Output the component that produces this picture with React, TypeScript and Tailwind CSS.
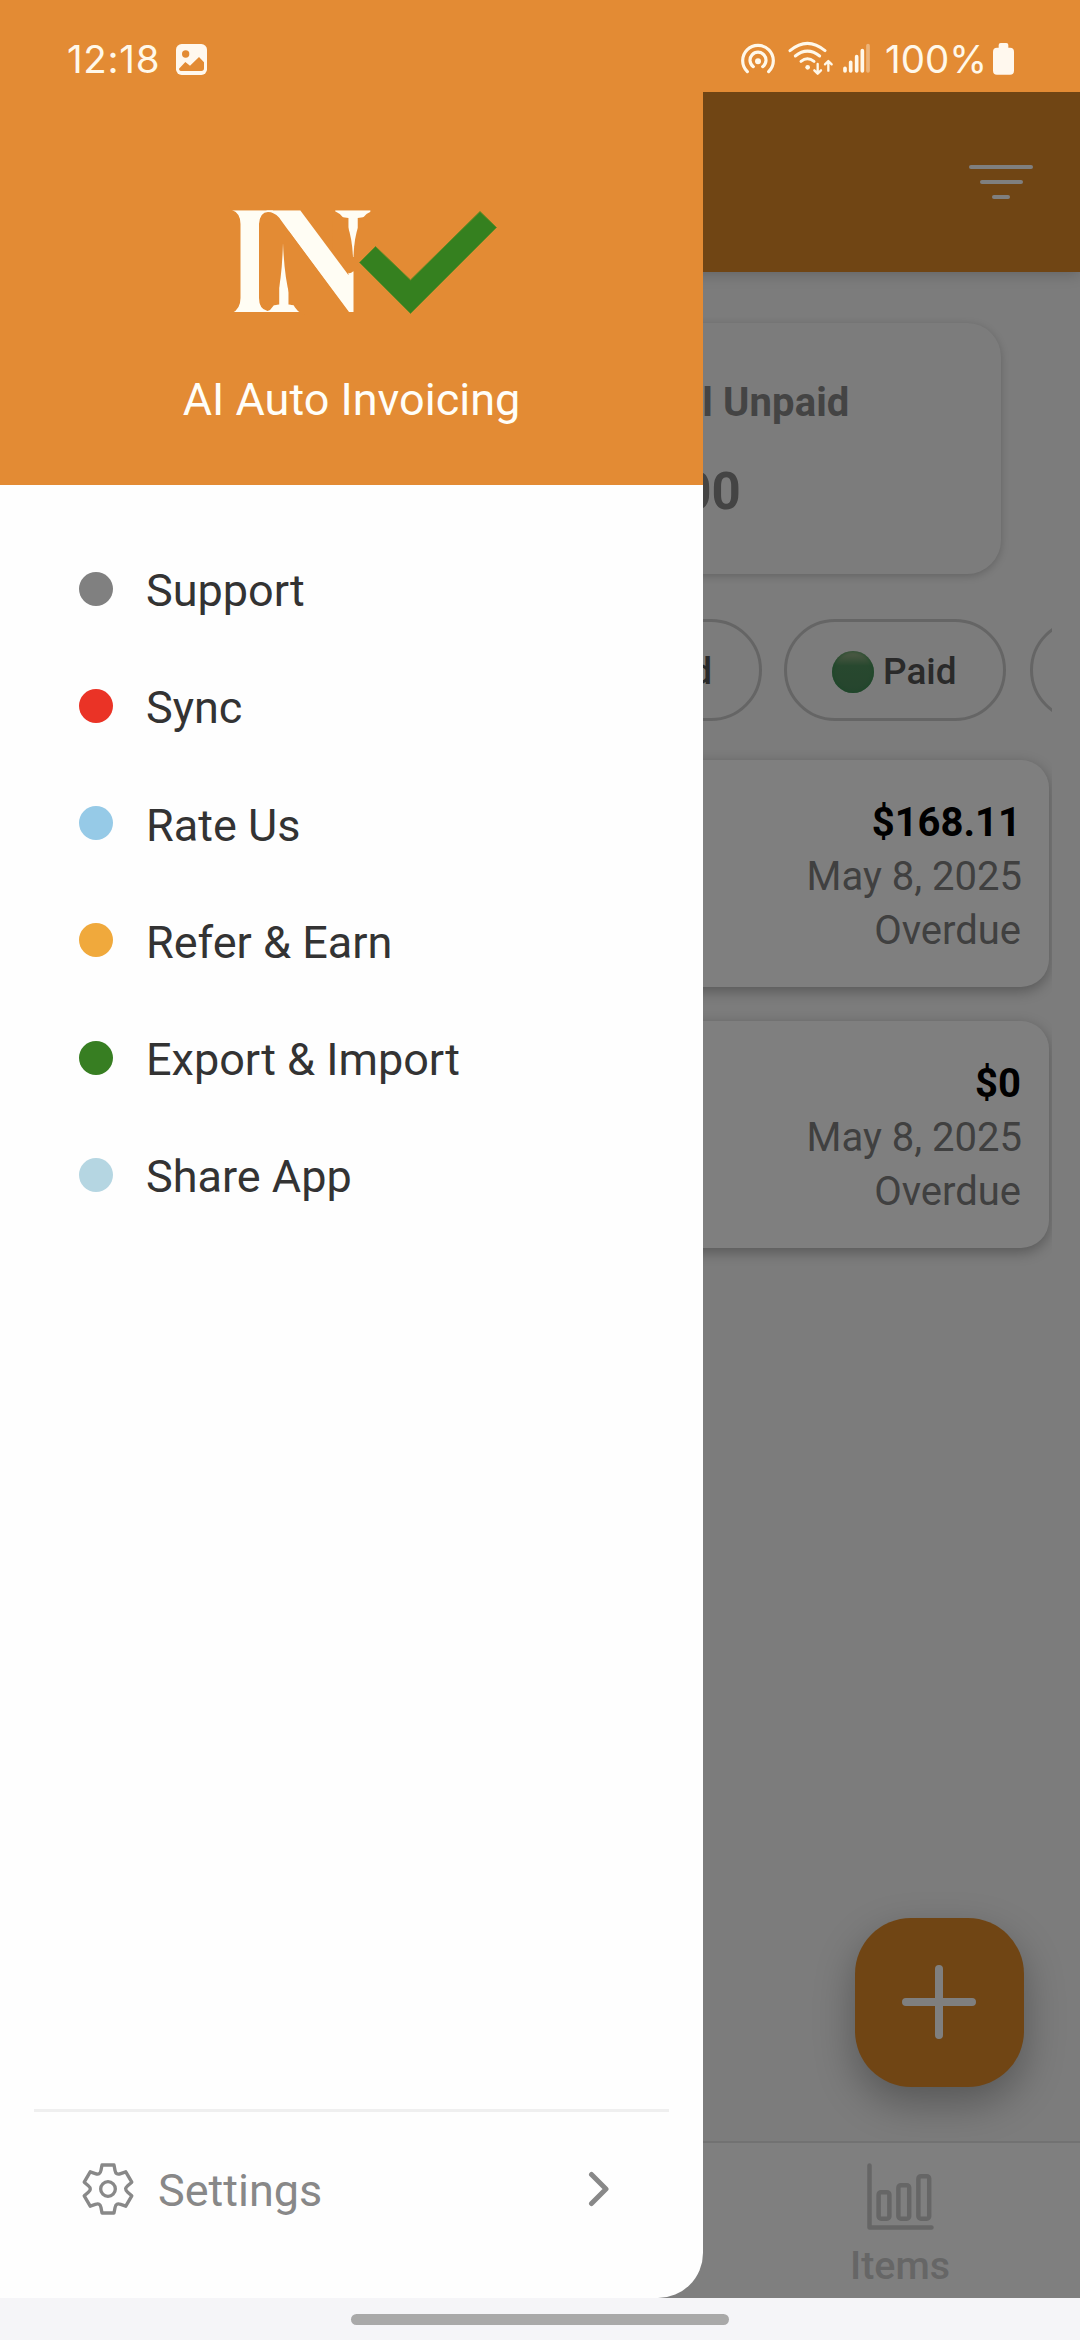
import React from "react";

const menu = [
  { label: "Support", dot: "bg-[#808080]" },
  { label: "Sync", dot: "bg-[#ea3326]" },
  { label: "Rate Us", dot: "bg-[#96cae7]" },
  { label: "Refer & Earn", dot: "bg-[#f0a93c]" },
  { label: "Export & Import", dot: "bg-[#377e22]" },
  { label: "Share App", dot: "bg-[#b5d6e2]" },
];

const invoices = [
  { amount: "$168.11", date: "May 8, 2025", status: "Overdue" },
  { amount: "$0", date: "May 8, 2025", status: "Overdue" },
];

function gearPath() {
  const sector = [
    [-18, -72], [18, -72], [21, -56],
    [22.5, -48], [26.5, -46],
    [30.3, -43.4], [38, -46.2],
  ];
  let d = "";
  for (let i = 0; i < 6; i++) {
    const a = (i * Math.PI) / 3;
    const p = sector.map(([x, y]) =>
      `${(x * Math.cos(a) - y * Math.sin(a)).toFixed(2)} ${(x * Math.sin(a) + y * Math.cos(a)).toFixed(2)}`
    );
    d += `${i ? "L" : "M"}${p[0]}L${p[1]}L${p[2]}Q${p[3]} ${p[4]}Q${p[5]} ${p[6]}`;
  }
  return d + "Z";
}

function StatusBar() {
  return (
    <div className="flex h-[92px] shrink-0 items-start bg-[#e38b34] pl-[67px] pr-[65px] pt-10 font-['Inter'] text-[38.5px] leading-[39px] text-[#fff8ea]">
      <span className="w-[109px] whitespace-nowrap tracking-[0.7px]">12:18</span>
      <svg className="mt-1 h-[31px] w-[31px]" viewBox="528 132 93 93">
        <rect x="528" y="132" width="93" height="93" rx="17" fill="#fff8ee" />
        <circle cx="557" cy="162" r="11" fill="#e38b34" />
        <path d="M537 206 L556 186 L570 197 L597 171 L612 187 V205 Q612 213 604 213 H546 Q537 213 537 206Z" fill="#e38b34" />
      </svg>
      <div className="ml-auto flex items-start">
        <svg className="h-[37px] w-9" viewBox="120 120 108 111" fill="none" stroke="#fff8ea" strokeWidth="9.5" strokeLinecap="round">
          <path d="M142 215 A46 46 0 1 1 206 215" />
          <path d="M160 200 A24 24 0 1 1 188 200" />
          <circle cx="174" cy="184" r="9" fill="#fff8ea" stroke="none" />
        </svg>
        <svg className="ml-3 h-[37px] w-[46px]" viewBox="264 120 138 111" fill="none" stroke="#fff8ea" strokeWidth="9" strokeLinecap="round" strokeLinejoin="round">
          <path d="M270 152 Q322 108 375 152" />
          <path d="M286 168 Q322 139 359 168" />
          <path d="M303 184 Q322 169 342 184" />
          <circle cx="323" cy="202" r="7" fill="#fff8ea" stroke="none" />
          <path d="M353 192 V219 M343 211 L353 221 L363 211" strokeWidth="7" />
          <path d="M385 212 V184 M375 193 L385 183 L395 193" strokeWidth="7" />
        </svg>
        <svg className="ml-2 h-[37px] w-[29px]" viewBox="426 120 87 111" stroke="#fff8ea" strokeWidth="11" strokeLinecap="round">
          <path d="M435 205V213M452 187V213M470 170V213M487 152V213" />
          <path d="M504 137V213" opacity=".38" />
        </svg>
        <span className="ml-[14px] w-[106px] whitespace-nowrap">100%</span>
        <svg className="ml-px h-[37px] w-[23px]" viewBox="876 120 69 111" fill="#fff8ee">
          <rect x="879" y="143" width="63" height="81" rx="12" />
          <rect x="896" y="129" width="29" height="25" rx="6" />
        </svg>
      </div>
    </div>
  );
}

function Logo() {
  return (
    <svg className="h-[176px] w-[296px] overflow-visible" viewBox="204 174 296 176">
      <text
        transform="translate(219.500 312) scale(.97 1)"
        fill="#fffdf4"
        fontFamily="Liberation Serif, serif"
        fontWeight="700"
        fontSize="155"
        letterSpacing="-14.7"
      >
        IN
      </text>
      {/* stencil cuts around the stems */}
      <g fill="#e38b34">
        <path d="M215 205H228L232 210Q240.500 213 240.500 224V298Q240.500 309 232 313H215Z" />
        <path d="M259 224Q260 212 268 212Q274 212 279 217.500L291 234L348 311.500V316H306L301 313Q285.500 306 283 243Q281 308 267.500 311Q259 309 259 298Z" />
        <path d="M332 212.500L335.500 211.500Q351 218 353 257L348 272L333 252Z" />
        <path d="M371 211.500L374 213V316H353.500V256Q355 218 371 211.500Z" />
        <path d="M346 257H360V270L353 271.500Q349 275 346 271Z" />
      </g>
      <path d="M359.500 262.500L375.500 246.500L410.500 280L480 211.500L496.500 227.500L410.500 313.500Z" fill="#35801f" stroke="#6a8a25" strokeWidth="1" />
    </svg>
  );
}

function Drawer() {
  return (
    <aside className="absolute left-0 top-0 flex h-full w-[703px] flex-col overflow-hidden rounded-br-[45px] bg-[#fefefe]">
      <div className="flex h-[393px] shrink-0 flex-col items-center bg-[#e38b34] pt-[82px]">
        <Logo />
        <div className="mt-[23px] text-[45px] leading-[53px] text-[#fffef8]">AI Auto Invoicing</div>
      </div>
      <nav className="flex flex-col pt-[45px]">
        {menu.map((m) => (
          <div key={m.label} className="flex h-[117.25px] items-center pl-[79px]">
            <span className={`size-[34px] rounded-full ${m.dot}`} />
            <span className="ml-[33px] pt-1 text-[45px] leading-[53px] text-[#333333]">{m.label}</span>
          </div>
        ))}
      </nav>
      <div className="mx-[34px] mt-auto h-[189px] border-t-[3px] border-[#efefef]">
        <div className="flex items-center pl-12 pr-[59px] pt-12">
          <svg className="size-[52px]" viewBox="-78 -78 156 156" fill="none" stroke="#888888" strokeWidth="10" strokeLinejoin="round">
            <path d={gearPath()} />
            <circle r="22" />
          </svg>
          <span className="ml-6 pt-1 text-[45px] leading-[53px] text-[#888888]">Settings</span>
          <svg className="ml-auto h-[36px] w-[22px]" viewBox="0 0 22 36" fill="none" stroke="#888888" strokeWidth="5" strokeLinecap="round" strokeLinejoin="round">
            <path d="M3.500 3.500L18 18L3.500 32.500" />
          </svg>
        </div>
      </div>
    </aside>
  );
}

function Home() {
  return (
    <main className="flex h-full flex-col bg-[#f8f8f8]">
      <header className="z-10 flex h-[180px] shrink-0 items-center justify-end bg-[#e08a28] pr-[47px] shadow-[0_2px_14px_rgba(0,0,0,0.2)]">
        <div className="flex flex-col items-center gap-[11px]">
          <span className="h-1 w-16 rounded-full bg-white" />
          <span className="h-1 w-[43px] rounded-full bg-white" />
          <span className="h-1 w-[18px] rounded-full bg-white" />
        </div>
      </header>
      <section className="mr-[79px] mt-[51px] flex h-[251px] shrink-0 flex-col rounded-r-[34px] bg-[#f9f9f9] pl-[609px] shadow-[0_2px_8px_rgba(0,0,0,0.2)]">
        <h2 className="ml-[14px] mt-[56px] whitespace-nowrap text-[40px] font-bold leading-[47px] tracking-[0.1px] text-[#888888]">Total Unpaid</h2>
        <p className="mt-[36px] text-[51px] font-bold leading-[60px] text-[#888888]">$0.00</p>
      </section>
      <section className="mr-7 mt-[45px] flex h-[102px] shrink-0 justify-end overflow-hidden text-[37px] font-medium leading-[102px] text-[#555555]">
        <div className="mr-[22px] flex w-[230px] shrink-0 items-center justify-end rounded-full border-[3px] border-[#cacaca] pr-[47px] pt-[3px]">Unpaid</div>
        <div className="mr-6 flex w-[222px] shrink-0 items-center rounded-full border-[3px] border-[#cacaca] pl-[45px] pt-[3px]">
          <span className="mr-[9px] size-[42px] rounded-full bg-linear-to-b from-[#a9b993] via-[#50915e] via-35% to-[#4c8a5c] shadow-[inset_0_0_4px_#2d8f4a]" />
          <span>Paid</span>
        </div>
        <div className="w-[22px] shrink-0 overflow-hidden">
          <div className="h-[102px] w-[200px] rounded-full border-[3px] border-[#cacaca]" />
        </div>
      </section>
      <section className="mr-7 flex shrink-0 flex-col gap-[34px] overflow-hidden pb-10 pr-[3px] pt-[39px]">
        {invoices.map((v) => (
          <article key={v.amount} className="flex h-[227px] flex-col items-end rounded-r-[28px] bg-white pr-7 pt-[36px] text-[40px] leading-[54px] text-[#808080] shadow-[0_4px_14px_rgba(0,0,0,0.3)]">
            <strong className="font-bold text-black">{v.amount}</strong>
            <span className="-mr-px">{v.date}</span>
            <span>{v.status}</span>
          </article>
        ))}
      </section>
      <div className="mt-auto flex shrink-0 justify-end pb-[54px] pr-14">
        <button className="flex size-[169px] items-center justify-center rounded-[56px] bg-[#e08a28] shadow-[0_16px_40px_rgba(0,0,0,0.3)]">
          <svg className="size-[76px]" viewBox="0 0 76 76" stroke="#ffffff" strokeWidth="8" strokeLinecap="round">
            <path d="M37 4V70M4 37H70" />
          </svg>
        </button>
      </div>
      <footer className="flex h-[157px] shrink-0 justify-end border-t-2 border-[#e4e4e4] bg-white">
        <div className="flex w-[360px] flex-col items-center pt-5">
          <svg className="h-[68px] w-[67px]" viewBox="866 2163 67 68" fill="none" stroke="#cccccc" strokeWidth="4.500" strokeLinecap="round" strokeLinejoin="round">
            <path d="M868.500 2165.500V2227.500H930.500" />
            <rect x="877.600" y="2192.200" width="10.800" height="26.500" rx="2.500" />
            <rect x="897.400" y="2185.200" width="10.800" height="33.500" rx="2.500" />
            <rect x="917.400" y="2176.200" width="10.800" height="42.500" rx="2.500" />
          </svg>
          <span className="mt-[11px] text-[39.400px] font-medium leading-[47px] text-[#cccccc]">Items</span>
        </div>
      </footer>
    </main>
  );
}

export default function App() {
  return (
    <div className="flex h-[2340px] w-[1080px] flex-col overflow-hidden bg-[#f5f5f8] font-['Roboto',sans-serif]">
      <StatusBar />
      <div className="relative h-[2206px] shrink-0 overflow-hidden">
        <Home />
        <div className="absolute inset-0 z-20 bg-black/50" />
        <div className="absolute inset-y-0 left-0 z-30">
          <Drawer />
        </div>
      </div>
      <div className="flex h-[42px] shrink-0 justify-center pt-4">
        <span className="h-[11px] w-[378px] rounded-full bg-[#a9a9a9]" />
      </div>
    </div>
  );
}
